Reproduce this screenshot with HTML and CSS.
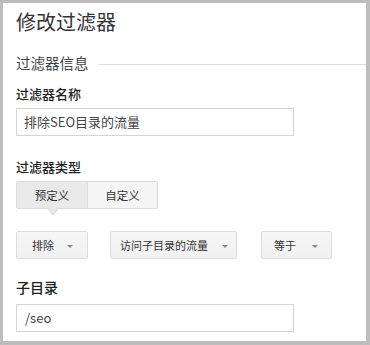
FILE: index.html
```html
<!DOCTYPE html>
<html lang="zh">
<head>
<meta charset="utf-8">
<link rel="stylesheet" href="styles.css">
</head>
<body>
<div class="panel">
  <h1 class="title">修改过滤器</h1>
  <div class="section">
    <span class="section-text">过滤器信息</span>
    <span class="section-line"></span>
  </div>
  <div class="label label-name">过滤器名称</div>
  <div class="input">排除SEO目录的流量</div>
  <div class="label label-type">过滤器类型</div>
  <div class="toggle">
    <div class="toggle-btn active">预定义<span class="pointer"></span></div>
    <div class="toggle-btn second">自定义</div>
  </div>
  <div class="dropdowns">
    <div class="dd dd1">排除<span class="caret"></span></div>
    <div class="dd dd2">访问子目录的流量<span class="caret"></span></div>
    <div class="dd dd3">等于<span class="caret"></span></div>
  </div>
  <div class="label label-sub">子目录</div>
  <div class="input input-sub">/seo</div>
</div>
</body>
</html>
```
FILE: styles.css
```css
html, body {
  margin: 0;
  padding: 0;
  background: #ffffff;
}
body {
  font-family: "Noto Sans CJK SC", "Noto Sans", "Liberation Sans", sans-serif;
}
.panel {
  box-sizing: border-box;
  width: 370px;
  height: 345px;
  border: 3px solid #bdbdbd;
  border-right-width: 4px;
  border-bottom-width: 4px;
  padding: 5px 0 0 13px;
  background: #fff;
  overflow: hidden;
}
.title {
  margin: 0;
  font-size: 20px;
  font-weight: normal;
  line-height: 28px;
  color: #333;
}
.section {
  display: flex;
  align-items: center;
  margin-top: 17px;
  height: 20px;
}
.section-text {
  font-size: 14.5px;
  line-height: 20px;
  color: #444;
}
.section-line {
  flex: 1;
  height: 1px;
  background: #dddddd;
  margin-left: 10px;
  margin-top: 3px;
}
.label {
  font-size: 13px;
  line-height: 20px;
  font-weight: 500;
  color: #222;
}
.label-name { margin-top: 11px; }
.label-type { margin-top: 21px; }
.label-sub { margin-top: 18px; font-size: 14px; }
.input {
  box-sizing: border-box;
  width: 278px;
  height: 28px;
  margin-top: 4px;
  border: 1px solid #d4d4d4;
  padding: 0 7px;
  font-size: 13px;
  line-height: 26px;
  color: #444;
}
.input-sub { margin-top: 7px; padding-left: 8px; }
.toggle {
  display: flex;
  margin-top: 4px;
  width: 142px;
  height: 28px;
}
.toggle-btn {
  position: relative;
  box-sizing: border-box;
  height: 28px;
  display: flex;
  align-items: center;
  justify-content: center;
  font-size: 11.5px;
  color: #333;
  border: 1px solid #dcdcdc;
}
.toggle-btn.active {
  width: 72px;
  background: #e9e9e9;
  border-radius: 2px 0 0 2px;
}
.toggle-btn.second {
  width: 70px;
  background: #f5f5f5;
  border-left: none;
  border-radius: 0 2px 2px 0;
}
.pointer {
  position: absolute;
  left: 30px;
  bottom: -8px;
  width: 0;
  height: 0;
  border-left: 6px solid transparent;
  border-right: 6px solid transparent;
  border-top: 8px solid #dcdcdc;
}
.pointer::after {
  content: "";
  position: absolute;
  left: -5px;
  top: -9px;
  border-left: 5px solid transparent;
  border-right: 5px solid transparent;
  border-top: 7px solid #e9e9e9;
}
.dropdowns {
  display: flex;
  margin-top: 22px;
  height: 28px;
}
.dd {
  box-sizing: border-box;
  height: 28px;
  display: flex;
  align-items: center;
  font-size: 11px;
  color: #333;
  border: 1px solid #dcdcdc;
  border-radius: 2px;
  background: linear-gradient(#f6f6f6, #f1f1f1);
  padding-left: 15px;
}
.dd1 { width: 72px; }
.dd2 { width: 127px; margin-left: 22px; padding-left: 9px; }
.dd3 { width: 71px; margin-left: 24px; padding-left: 12px; }
.caret {
  width: 0;
  height: 0;
  border-left: 3px solid transparent;
  border-right: 3px solid transparent;
  border-top: 3px solid #888;
  margin-left: 13px;
  margin-top: 2px;
}
.dd2 .caret { margin-left: 14px; }
.dd3 .caret { margin-left: 16px; }
```
